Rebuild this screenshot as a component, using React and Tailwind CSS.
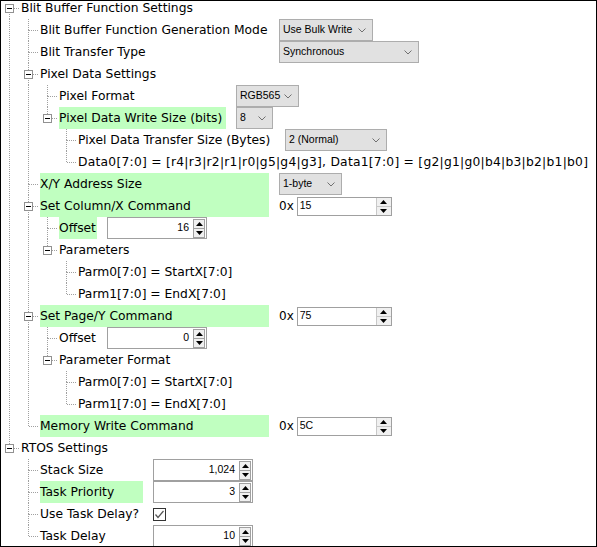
import React from "react";

const LINE = "#a0a0a0";

const TREE = [
  {
    label: "Blit Buffer Function Settings",
    children: [
      { label: "Blit Buffer Function Generation Mode", w: "w-[229px]", ctrl: { type: "select", value: "Use Bulk Write", w: "w-[94px]" } },
      { label: "Blit Transfer Type", w: "w-[229px]", ctrl: { type: "select", value: "Synchronous", w: "w-[140px]" } },
      {
        label: "Pixel Data Settings",
        children: [
          { label: "Pixel Format", w: "w-[167px]", ctrl: { type: "select", value: "RGB565", w: "w-[63px]" } },
          {
            label: "Pixel Data Write Size (bits)",
            green: true,
            w: "w-[167px]",
            ctrl: { type: "select", value: "8", w: "w-[37px]" },
            children: [
              { label: "Pixel Data Transfer Size (Bytes)", w: "w-[197px]", ctrl: { type: "select", value: "2 (Normal)", w: "w-[102px]" } },
              {
                label: "Data0[7:0] = [r4|r3|r2|r1|r0|g5|g4|g3], Data1[7:0] = [g2|g1|g0|b4|b3|b2|b1|b0]",
                wide: true,
              },
            ],
          },
        ],
      },
      { label: "X/Y Address Size", green: true, w: "w-[229px]", ctrl: { type: "select", value: "1-byte", w: "w-[63px]" } },
      {
        label: "Set Column/X Command",
        green: true,
        w: "w-[229px]",
        ctrl: { type: "hex", value: "15" },
        children: [
          { label: "Offset", green: true, w: "w-[38px]", ctrl: { type: "num", value: "16" } },
          {
            label: "Parameters",
            children: [{ label: "Parm0[7:0] = StartX[7:0]" }, { label: "Parm1[7:0] = EndX[7:0]" }],
          },
        ],
      },
      {
        label: "Set Page/Y Command",
        green: true,
        w: "w-[229px]",
        ctrl: { type: "hex", value: "75" },
        children: [
          { label: "Offset", w: "w-[38px]", ctrl: { type: "num", value: "0" } },
          {
            label: "Parameter Format",
            children: [{ label: "Parm0[7:0] = StartX[7:0]" }, { label: "Parm1[7:0] = EndX[7:0]" }],
          },
        ],
      },
      { label: "Memory Write Command", green: true, w: "w-[229px]", ctrl: { type: "hex", value: "5C" } },
    ],
  },
  {
    label: "RTOS Settings",
    children: [
      { label: "Stack Size", w: "w-[103px]", ctrl: { type: "num", value: "1,024" } },
      { label: "Task Priority", green: true, w: "w-[103px]", ctrl: { type: "num", value: "3" } },
      { label: "Use Task Delay?", w: "w-[103px]", ctrl: { type: "check" } },
      { label: "Task Delay", w: "w-[103px]", ctrl: { type: "num", value: "10" } },
    ],
  },
];

// walk the tree into rows, keeping track of which ancestor lines continue
function flatten(nodes, level, guides, out) {
  nodes.forEach((n, i) => {
    const last = i === nodes.length - 1;
    out.push({ ...n, level, guides, last, first: level === 0 && i === 0 });
    if (n.children) flatten(n.children, level + 1, [...guides, !last], out);
  });
  return out;
}

function Guide({ on }) {
  return (
    <svg width="19" height="22" className="shrink-0">
      {on && <line x1="8.5" y1="0" x2="8.5" y2="22" stroke={LINE} strokeDasharray="1 1" />}
    </svg>
  );
}

function Connector({ first, last, box }) {
  return (
    <svg width="19" height="22" className="shrink-0">
      {!first && <line x1="8.5" y1="0" x2="8.5" y2="11" stroke={LINE} strokeDasharray="1 1" />}
      {!last && <line x1="8.5" y1="11" x2="8.5" y2="22" stroke={LINE} strokeDasharray="1 1" />}
      <line x1={box ? 13 : 9} y1="11.5" x2="19" y2="11.5" stroke={LINE} strokeDasharray="1 1" />
      {box && (
        <>
          <rect x="4.5" y="7.5" width="8" height="8" fill="#fff" stroke="#919191" />
          <line x1="6" y1="11.5" x2="11" y2="11.5" stroke="#000" />
        </>
      )}
    </svg>
  );
}

function Chevron() {
  return (
    <svg width="8" height="5" className="shrink-0">
      <polyline points="0.5,0.5 4,4 7.5,0.5" fill="none" stroke="#707070" />
    </svg>
  );
}

function Select({ value, w }) {
  return (
    <div className={`flex h-[22px] items-center justify-between border border-[#adadad] bg-[#e1e1e1] pl-[3px] pr-[6px] ${w}`}>
      <span className="text-black">{value}</span>
      <Chevron />
    </div>
  );
}

function Up() {
  return (
    <svg width="7" height="4">
      <polygon points="0,4 3.5,0 7,4" fill="#000" />
    </svg>
  );
}

function Down() {
  return (
    <svg width="7" height="4">
      <polygon points="0,0 3.5,4 7,0" fill="#000" />
    </svg>
  );
}

function Hex({ value }) {
  return (
    <div className="flex items-center">
      <span className="font-['DejaVu_Sans',sans-serif] text-[12px]">0x</span>
      <div className="ml-[3px] flex h-[19px] w-[95px] items-stretch justify-between border border-[#a0a0a0] bg-white">
        <span className="flex items-center pl-[2px]">{value}</span>
        <div className="flex w-[15px] flex-col border-l border-[#c8c8c8] bg-[#f0f0f0]">
          <div className="flex flex-1 items-center justify-center border-b border-[#c8c8c8]">
            <Up />
          </div>
          <div className="flex flex-1 items-center justify-center">
            <Down />
          </div>
        </div>
      </div>
    </div>
  );
}

function Num({ value }) {
  return (
    <div className="flex h-[22px] w-[100px] items-center justify-end gap-[4px] border border-[#a0a0a0] bg-white pr-[1px]">
      <span>{value}</span>
      <div className="flex flex-col">
        <div className="flex h-[10px] w-[12px] items-center justify-center border border-[#a0a0a0] bg-[#f0f0f0]">
          <Up />
        </div>
        <div className="-mt-px flex h-[10px] w-[12px] items-center justify-center border border-[#a0a0a0] bg-[#f0f0f0]">
          <Down />
        </div>
      </div>
    </div>
  );
}

function Check() {
  return (
    <div className="flex h-[13px] w-[13px] items-center justify-center border border-[#333] bg-white">
      <svg width="11" height="11">
        <polyline points="1.5,5.5 4,8.5 9.5,2" fill="none" stroke="#555" strokeWidth="1.2" />
      </svg>
    </div>
  );
}

function Control({ ctrl }) {
  if (ctrl.type === "select") return <Select value={ctrl.value} w={ctrl.w} />;
  if (ctrl.type === "hex") return <Hex value={ctrl.value} />;
  if (ctrl.type === "num") return <Num value={ctrl.value} />;
  return <Check />;
}

export default function App() {
  const rows = flatten(TREE, 0, [], []);
  return (
    <div className="h-[547px] w-[597px] overflow-hidden border border-black bg-white text-black">
      <div className="-mt-[4px] flex flex-col">
        {rows.map((r, i) => (
          <div key={i} className="flex h-[22px] shrink-0 items-center">
            {r.guides.map((on, j) => (
              <Guide key={j} on={on} />
            ))}
            <Connector first={r.first} last={r.last} box={!!r.children} />
            <div
              className={`ml-px flex h-full shrink-0 items-center whitespace-nowrap font-['DejaVu_Sans',sans-serif] text-[12.3px] ${r.wide ? "tracking-[0.25px]" : ""} ${r.w || ""} ${r.green ? "bg-[#c0ffc0]" : ""}`}
            >
              {r.label}
            </div>
            {r.ctrl && (
              <div className="ml-[10px] font-['Liberation_Sans',Arial,sans-serif] text-[10.5px]">
                <Control ctrl={r.ctrl} />
              </div>
            )}
          </div>
        ))}
      </div>
    </div>
  );
}
